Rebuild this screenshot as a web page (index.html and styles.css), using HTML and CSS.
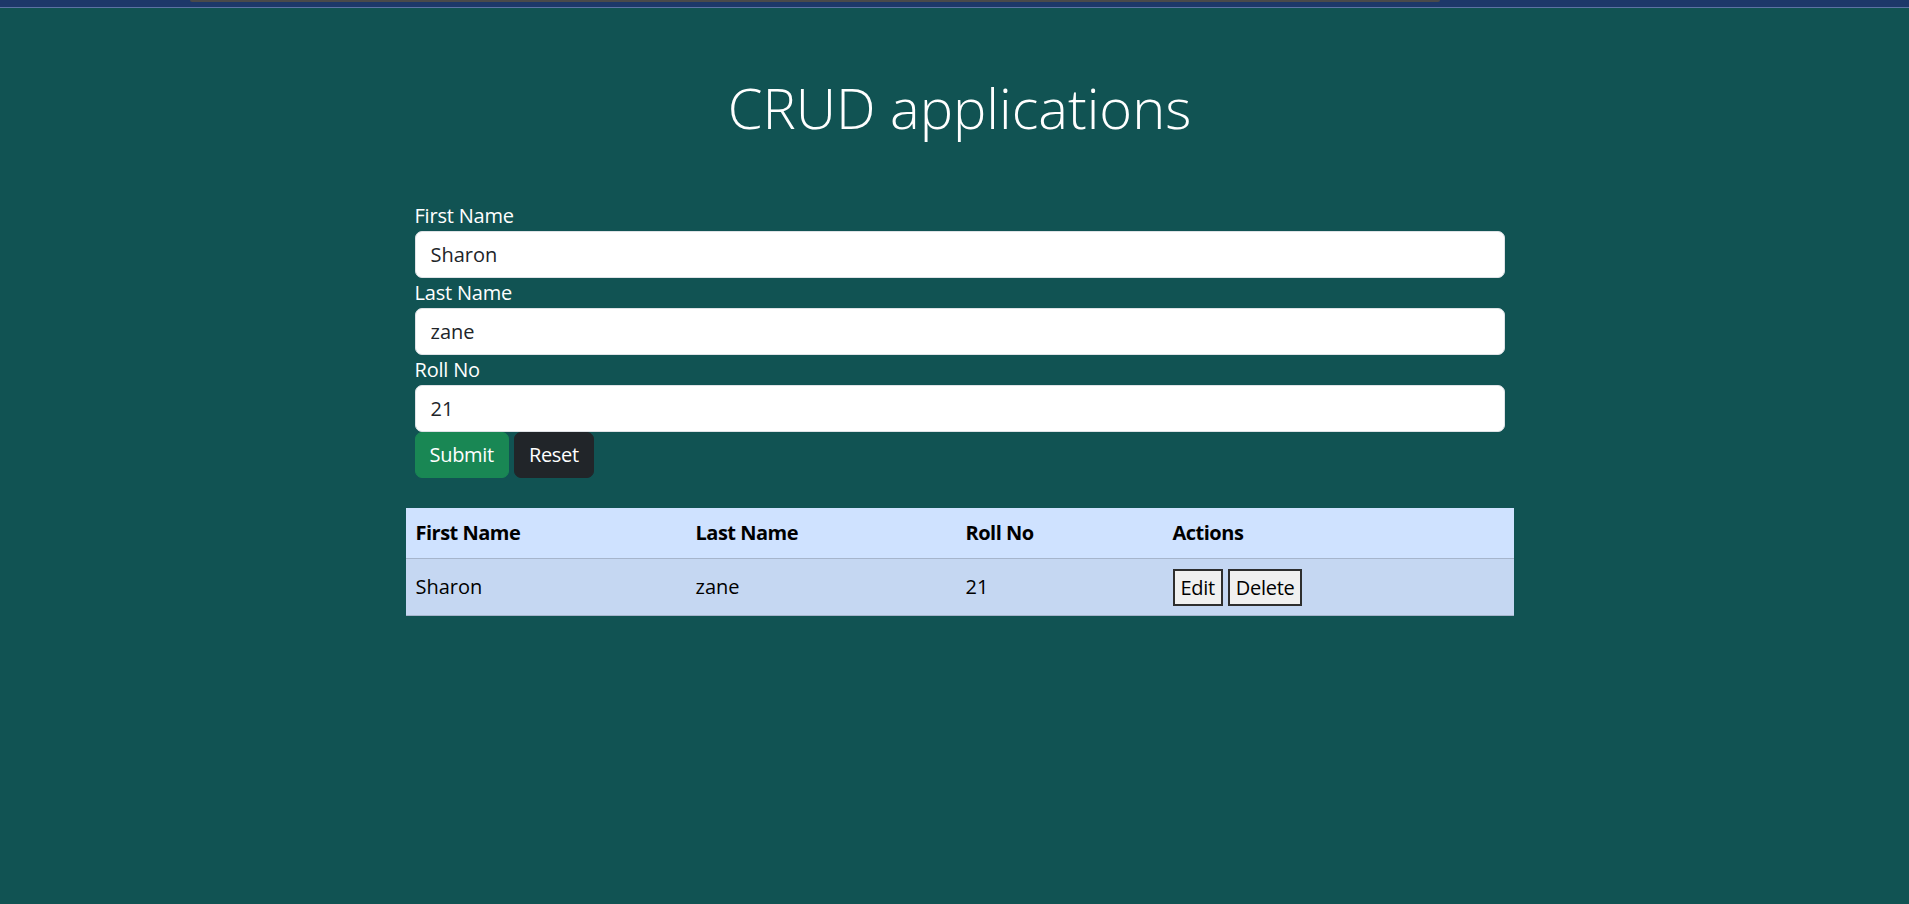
FILE: index.html
```html
<!DOCTYPE html>
<html lang="en">
<head>
<meta charset="utf-8">
<title>CRUD applications</title>
<link rel="stylesheet" href="styles.css">
</head>
<body>
<div class="topbar"><div class="tabstrip"></div></div>
<div class="page">
<main class="container">
  <h1 class="title">CRUD applications</h1>
  <form class="form">
    <label class="label" for="fn">First Name</label>
    <input class="control" id="fn" type="text" value="Sharon">
    <label class="label" for="ln">Last Name</label>
    <input class="control" id="ln" type="text" value="zane">
    <label class="label" for="rn">Roll No</label>
    <input class="control" id="rn" type="text" value="21">
    <div class="actions">
      <button type="button" class="btn btn-success">Submit</button>
      <button type="button" class="btn btn-dark">Reset</button>
    </div>
  </form>
  <table class="table">
    <colgroup>
      <col class="c1"><col class="c2"><col class="c3"><col class="c4">
    </colgroup>
    <thead>
      <tr><th>First Name</th><th>Last Name</th><th>Roll No</th><th>Actions</th></tr>
    </thead>
    <tbody>
      <tr>
        <td>Sharon</td><td>zane</td><td>21</td>
        <td><div class="row-actions"><button type="button" class="plain">Edit</button><button type="button" class="plain">Delete</button></div></td>
      </tr>
    </tbody>
  </table>
</main>
</div>
</body>
</html>
```
FILE: styles.css
```css
* { box-sizing: border-box; }
html, body { margin: 0; padding: 0; }
body {
  background: #115353;
  font-family: "Open Sans", "Noto Sans", sans-serif;
  font-size: 20px;
  line-height: 30px;
  color: #ffffff;
  height: 904px;
  overflow: hidden;
}
.topbar {
  height: 8px;
  background: #1d3869;
  border-bottom: 1px solid #5c73a3;
}
.tabstrip {
  margin-left: 190px;
  width: 1250px;
  height: 2px;
  background: #4a4a4a;
  border-radius: 0 0 4px 4px;
}
.page {
  padding-left: 10px;
}
.container {
  width: 1108px;
  margin: 0 auto;
}
.title {
  margin: 66px 0 60px;
  font-size: 56px;
  line-height: 67px;
  font-weight: 300;
  text-align: center;
  color: #ffffff;
}
.form {
  padding: 0 9px;
  display: flex;
  flex-direction: column;
}
.label {
  display: block;
  height: 30px;
  line-height: 30px;
  color: #ffffff;
  letter-spacing: -0.2px;
}
.control {
  display: block;
  width: 100%;
  height: 47px;
  padding: 7px 15px;
  font-family: inherit;
  font-size: 20px;
  line-height: 30px;
  color: #212529;
  background: #ffffff;
  border: 1px solid #dee2e6;
  border-radius: 7px;
  outline: none;
}
.actions {
  display: flex;
  gap: 5px;
}
.btn {
  height: 46px;
  padding: 7px 14px;
  font-family: inherit;
  font-size: 20px;
  line-height: 30px;
  letter-spacing: -0.3px;
  color: #ffffff;
  border: 1px solid transparent;
  border-radius: 7px;
}
.btn-success { background: #198754; border-color: #198754; }
.btn-dark { background: #212529; border-color: #212529; }
.table {
  margin-top: 30px;
  width: 1108px;
  table-layout: fixed;
  border-collapse: collapse;
  color: #000000;
}
.c1 { width: 280px; }
.c2 { width: 270px; }
.c3 { width: 207px; }
.c4 { width: 351px; }
.table th, .table td {
  padding: 10px;
  text-align: left;
  vertical-align: top;
  border-bottom: 1px solid #a6b5cc;
}
.table th {
  background: #cfe2ff;
  font-weight: 700;
  letter-spacing: -0.5px;
}
.table td {
  background: #c5d7f2;
  padding-bottom: 9px;
}
.table td:not(:last-child) {
  padding-top: 13px;
  padding-bottom: 13px;
}
.row-actions {
  display: flex;
  gap: 5px;
}
.plain {
  height: 37px;
  padding: 1px 6px;
  font-family: inherit;
  font-size: 20px;
  line-height: 30px;
  letter-spacing: -0.3px;
  color: #000000;
  background: #f0f0f0;
  border: 2px solid #2e2e2e;
  border-radius: 0;
}
```
